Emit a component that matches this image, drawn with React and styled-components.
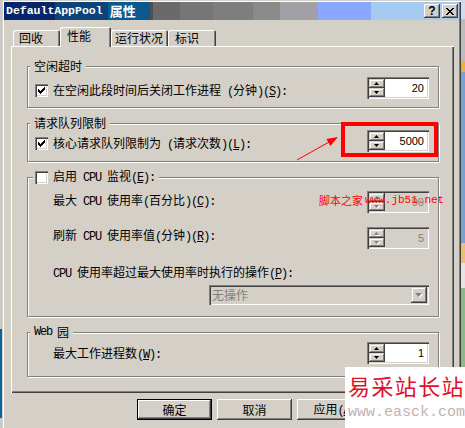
import React from 'react';
import styled, { createGlobalStyle } from 'styled-components';

const GRAY = '#d4d0c8';
const CJK_FONT = '"Noto Sans CJK SC", "Noto Sans", sans-serif';
const MONO_FONT = '"Liberation Mono", "Noto Sans CJK SC", monospace';

const Global = createGlobalStyle`
  html, body { margin: 0; padding: 0; background: ${GRAY}; overflow: hidden; }
  #root { width: 465px; height: 428px; }
`;

const Desktop = styled.div`
  position: relative;
  display: flex;
  width: 465px;
  height: 428px;
  overflow: hidden;
  background: ${GRAY};
  font-family: ${CJK_FONT};
  font-size: 12px;
  line-height: 14px;
  color: #000;
`;

const LeftStrip = styled.div`
  flex: none;
  width: 2px;
  background: linear-gradient(to bottom, #c8c8c8 0 329px, #0a64a0 329px 418px, #c8c8c8 418px);
`;

const RightStrip = styled.div`
  flex: none;
  width: 4px;
  background: linear-gradient(
    to bottom,
    #d0dcec 0 19px,
    #bcbcbc 19px 62px,
    #f0b040 62px 72px,
    #7aa0d8 72px 243px,
    #f0c070 243px 263px,
    #e4e4e4 263px 288px,
    #8cb88c 288px 367px,
    #ffffff 367px
  );
`;

const Window = styled.div`
  flex: none;
  width: 459px;
  box-sizing: border-box;
  padding: 2px 2px 0 2px;
  display: flex;
  flex-direction: column;
  background: ${GRAY};
  box-shadow: inset 1px 1px 0 ${GRAY}, inset 2px 2px 0 #fff, inset -1px 0 0 #404040, inset -2px 0 0 #808080;
`;

const TitleBar = styled.div`
  flex: none;
  height: 18px;
  display: flex;
  align-items: center;
  justify-content: space-between;
  padding: 0 1px 0 2px;
  background: linear-gradient(
    to right,
    #0a246a 0 51px,
    #0b437a 51px 104px,
    #0a5a90 104px 146px,
    #505050 146px 149px,
    #6a6a6a 149px 176px,
    #767676 176px 209px,
    #7e7e7e 209px 249px,
    #8a8a8a 249px 276px,
    #a0a0a6 276px 314px,
    #8aa8ff 314px 367px,
    #a6caf0 367px
  );
`;

const TitleText = styled.div`
  display: flex;
  align-items: center;
  gap: 7px;
  color: #fff;
  font-weight: bold;
  white-space: nowrap;
`;

const TitleLatin = styled.span`
  font-family: ${MONO_FONT};
  font-size: 11.5px;
`;

const TitleCJK = styled.span`
  font-family: ${CJK_FONT};
  font-size: 13px;
`;

const CapButtons = styled.div`
  display: flex;
  gap: 2px;
`;

const CapBtn = styled.div`
  box-sizing: border-box;
  width: 16px;
  height: 14px;
  display: flex;
  align-items: center;
  justify-content: center;
  background: ${GRAY};
  box-shadow: inset -1px -1px 0 #404040, inset 1px 1px 0 #fff, inset -2px -2px 0 #808080;
  font-family: "Liberation Sans", sans-serif;
  font-weight: bold;
  font-size: 12px;
  line-height: 12px;
  color: #000;
`;

const Body = styled.div`
  flex: 1;
  display: flex;
  flex-direction: column;
  padding: 7px 5px 0 7px;
`;

const TabStrip = styled.div`
  display: flex;
  align-items: flex-end;
  height: 19px;
  padding-left: 2px;
  position: relative;
  z-index: 2;
`;

const Tab = styled.div`
  box-sizing: border-box;
  width: ${p => p.$w}px;
  height: ${p => (p.$active ? 20 : 16)}px;
  margin-bottom: ${p => (p.$active ? -1 : 0)}px;
  padding-left: ${p => p.$pl}px;
  padding-bottom: ${p => (p.$active ? 2 : 0)}px;
  display: flex;
  align-items: center;
  background: ${GRAY};
  border-radius: 2px 2px 0 0;
  box-shadow: inset 1px 1px 0 #fff, inset -1px 0 0 #404040, inset -2px 0 0 #808080;
  white-space: nowrap;
`;

const Panel = styled.div`
  box-sizing: border-box;
  height: 347px;
  padding: 13px 15px 0 16px;
  display: flex;
  flex-direction: column;
  gap: 8px;
  background: ${GRAY};
  box-shadow: inset 1px 1px 0 #fff, inset -1px -1px 0 #404040, inset -2px -2px 0 #808080;
`;

const Group = styled.fieldset`
  margin: 0;
  padding: 0;
  min-width: 0;
  border: 1px solid #808080;
  box-shadow: inset 1px 1px 0 #fff, 1px 1px 0 #fff;
`;

const Legend = styled.legend`
  margin-left: ${p => p.$ml ?? 2}px;
  padding: 0 4px 0 ${p => p.$pl ?? 4}px;
  height: 14px;
  line-height: 14px;
  display: flex;
  align-items: center;
  gap: 5px;
  background: ${GRAY};
  white-space: nowrap;
`;

const GroupInner = styled.div`
  display: flex;
  flex-direction: column;
  padding: ${p => p.$pt}px 9px ${p => p.$pb}px 7px;
`;

const Row = styled.div`
  display: flex;
  align-items: flex-start;
  justify-content: space-between;
  margin-top: ${p => p.$mt || 0}px;
`;

const RowEnd = styled.div`
  display: flex;
  justify-content: flex-end;
  margin-top: ${p => p.$mt || 0}px;
`;

const LabelLine = styled.div`
  display: flex;
  align-items: center;
  gap: 5px;
  height: 13px;
  margin-top: ${p => p.$dy || 0}px;
  padding-left: ${p => p.$indent || 0}px;
  white-space: nowrap;
`;

const Run = styled.span`
  font-family: ${p => (p.$latin ? MONO_FONT : CJK_FONT)};
  letter-spacing: ${p => (p.$latin ? '-1.2px' : '0')};
  font-size: 12px;
`;

const Acc = styled.span`
  font-family: ${MONO_FONT};
  letter-spacing: -1.2px;
  text-decoration: underline;
  text-underline-offset: 1px;
`;

const CJK_RE = /[\u2e80-\u9fff\uf900-\ufaff\uff00-\uffef\u3000-\u303f]/;

function Mixed({ text }) {
  const runs = [];
  for (const ch of text) {
    const c = CJK_RE.test(ch);
    const last = runs[runs.length - 1];
    if (last && last.c === c) last.s += ch;
    else runs.push({ c, s: ch });
  }
  return runs.map((r, i) => (
    <Run key={i} $latin={!r.c}>
      {r.s}
    </Run>
  ));
}

function Label({ text, acc }) {
  return (
    <span>
      <Mixed text={text} />
      {acc && (
        <>
          <Run $latin>(</Run>
          <Acc>{acc}</Acc>
          <Run $latin>):</Run>
        </>
      )}
    </span>
  );
}

const CheckBox = styled.div`
  box-sizing: border-box;
  width: 13px;
  height: 13px;
  flex: none;
  background: #fff;
  box-shadow: inset 1px 1px 0 #808080, inset 2px 2px 0 #404040, inset -1px -1px 0 #fff, inset -2px -2px 0 ${GRAY};
  display: flex;
  align-items: center;
  justify-content: center;
`;

function Check({ checked }) {
  return (
    <CheckBox>
      {checked && (
        <svg width="13" height="13" viewBox="0 0 13 13" shapeRendering="crispEdges">
          <path d="M3 5h1v1h1v1h1V6h1V5h1V4h1V3h1v3H9v1H8v1H7v1H6v1H5V9H4V8H3z" fill="#000" />
        </svg>
      )}
    </CheckBox>
  );
}

const SpinBox = styled.div`
  box-sizing: border-box;
  width: 62px;
  height: 22px;
  flex: none;
  padding: 2px;
  display: flex;
  background: ${p => (p.$disabled ? GRAY : '#fff')};
  box-shadow: inset 1px 1px 0 #808080, inset 2px 2px 0 #404040, inset -1px -1px 0 #fff, inset -2px -2px 0 ${GRAY};
`;

const SpinBtns = styled.div`
  display: flex;
  flex-direction: column;
  width: 16px;
  flex: none;
`;

const RaisedBtn = styled.div`
  box-sizing: border-box;
  flex: 1;
  display: flex;
  align-items: center;
  justify-content: center;
  background: ${GRAY};
  box-shadow: inset -1px -1px 0 #404040, inset 1px 1px 0 ${GRAY}, inset -2px -2px 0 #808080, inset 2px 2px 0 #fff;
`;

const SpinValue = styled.div`
  flex: 1;
  text-align: right;
  padding-right: 3px;
  font-family: "Liberation Sans", Arial, sans-serif;
  font-size: 11px;
  line-height: 18px;
  color: ${p => (p.$disabled ? '#808080' : '#000')};
`;

function Arrow({ up, disabled, w = 5, h = 3 }) {
  const pts = up ? `0,${h} ${w},${h} ${w / 2},0` : `0,0 ${w},0 ${w / 2},${h}`;
  return (
    <svg width={w + 1} height={h + 1} viewBox={`0 0 ${w + 1} ${h + 1}`}>
      {disabled && <polygon points={pts} fill="#fff" transform="translate(1,1)" />}
      <polygon points={pts} fill={disabled ? '#808080' : '#000'} />
    </svg>
  );
}

function Spinner({ value, disabled }) {
  return (
    <SpinBox $disabled={disabled}>
      <SpinBtns>
        <RaisedBtn>
          <Arrow up disabled={disabled} />
        </RaisedBtn>
        <RaisedBtn>
          <Arrow disabled={disabled} />
        </RaisedBtn>
      </SpinBtns>
      <SpinValue $disabled={disabled}>{value}</SpinValue>
    </SpinBox>
  );
}

const Combo = styled.div`
  box-sizing: border-box;
  width: 220px;
  height: 20px;
  padding: 2px;
  display: flex;
  background: ${GRAY};
  box-shadow: inset 1px 1px 0 #808080, inset 2px 2px 0 #404040, inset -1px -1px 0 #fff, inset -2px -2px 0 ${GRAY};
`;

const ComboText = styled.div`
  flex: 1;
  padding-left: 1px;
  line-height: 16px;
  color: #808080;
`;

const ComboBtn = styled(RaisedBtn)`
  flex: none;
  width: 16px;
`;

const ButtonRow = styled.div`
  display: flex;
  justify-content: flex-end;
  gap: 5px;
  margin-top: 6px;
  padding-right: 2px;
`;

const PushBtn = styled.div`
  box-sizing: border-box;
  width: 75px;
  height: 21px;
  display: flex;
  align-items: center;
  justify-content: center;
  background: ${GRAY};
  box-shadow: ${p =>
    p.$default
      ? `inset 0 0 0 1px #000, inset -2px -2px 0 #404040, inset 2px 2px 0 #fff, inset -3px -3px 0 #808080`
      : `inset -1px -1px 0 #404040, inset 1px 1px 0 #fff, inset -2px -2px 0 #808080`};
`;

/* Overlays: annotations pasted on top of the screenshot */
const RedBox = styled.div`
  position: absolute;
  left: 341px;
  top: 122px;
  width: 97px;
  height: 35px;
  box-sizing: border-box;
  border: 4px solid #ff0000;
  pointer-events: none;
`;

const ArrowSvg = styled.svg`
  position: absolute;
  left: 290px;
  top: 130px;
`;

const JbMark = styled.div`
  position: absolute;
  left: 319px;
  top: 193px;
  display: flex;
  align-items: center;
  gap: 2px;
  color: #ff0000;
  white-space: nowrap;
  line-height: 14px;
`;

const JbCjk = styled.span`
  font-family: ${CJK_FONT};
  font-size: 11px;
`;

const JbUrl = styled.span`
  font-family: ${MONO_FONT};
  font-size: 11px;
`;

const EasckBox = styled.div`
  position: absolute;
  left: 345px;
  top: 367px;
  width: 120px;
  height: 61px;
  background: #fff;
  display: flex;
  flex-direction: column;
  padding: 3px 0 0 3px;
  box-sizing: border-box;
`;

const EasckTitle = styled.div`
  font-family: ${CJK_FONT};
  font-size: 22px;
  line-height: 30px;
  letter-spacing: 1.4px;
  color: #e0102a;
  white-space: nowrap;
`;

const EasckUrl = styled.div`
  font-family: ${MONO_FONT};
  font-size: 15px;
  line-height: 18px;
  margin-top: 4px;
  color: #c4b0b6;
  white-space: nowrap;
`;

const tabs = [
  { label: '回收', w: 47, pl: 6 },
  { label: '性能', w: 51, pl: 7, active: true },
  { label: '运行状况', w: 57, pl: 4 },
  { label: '标识', w: 48, pl: 7 },
];

export default function App() {
  return (
    <>
      <Global />
      <Desktop>
        <LeftStrip />
        <Window>
          <TitleBar>
            <TitleText>
              <TitleLatin>DefaultAppPool</TitleLatin>
              <TitleCJK>属性</TitleCJK>
            </TitleText>
            <CapButtons>
              <CapBtn>?</CapBtn>
              <CapBtn>
                <svg width="8" height="7" viewBox="0 0 8 7" shapeRendering="crispEdges">
                  <path d="M0 0h2v1h1v1h2V1h1V0h2v1H7v1H6v1H5v1h1v1h1v1h1v1H6V6H5V5H3v1H2v1H0V6h1V5h1V4h1V3H2V2H1V1H0z" fill="#000" />
                </svg>
              </CapBtn>
            </CapButtons>
          </TitleBar>
          <Body>
            <TabStrip>
              {tabs.map(t => (
                <Tab key={t.label} $w={t.w} $pl={t.pl} $active={t.active}>
                  {t.label}
                </Tab>
              ))}
            </TabStrip>
            <Panel>
              <Group>
                <Legend>
                  <Mixed text="空闲超时" />
                </Legend>
                <GroupInner $pt={4} $pb={8}>
                  <Row>
                    <LabelLine $dy={7}>
                      <Check checked />
                      <Label text="在空闲此段时间后关闭工作进程 (分钟)" acc="S" />
                    </LabelLine>
                    <Spinner value="20" />
                  </Row>
                </GroupInner>
              </Group>

              <Group>
                <Legend>
                  <Mixed text="请求队列限制" />
                </Legend>
                <GroupInner $pt={0} $pb={9}>
                  <Row>
                    <LabelLine $dy={7}>
                      <Check checked />
                      <Label text="核心请求队列限制为 (请求次数)" acc="L" />
                    </LabelLine>
                    <Spinner value="5000" />
                  </Row>
                </GroupInner>
              </Group>

              <Group>
                <Legend $ml={5} $pl={2}>
                  <Check />
                  <Label text="启用 CPU 监视" acc="E" />
                </Legend>
                <GroupInner $pt={7} $pb={11}>
                  <Row>
                    <LabelLine $dy={3} $indent={18}>
                      <Label text="最大 CPU 使用率(百分比)" acc="C" />
                    </LabelLine>
                    <Spinner value="90" disabled />
                  </Row>
                  <Row $mt={14}>
                    <LabelLine $dy={2} $indent={18}>
                      <Label text="刷新 CPU 使用率值(分钟)" acc="R" />
                    </LabelLine>
                    <Spinner value="5" disabled />
                  </Row>
                  <Row $mt={17}>
                    <LabelLine $indent={18}>
                      <Label text="CPU 使用率超过最大使用率时执行的操作" acc="P" />
                    </LabelLine>
                  </Row>
                  <RowEnd $mt={6}>
                    <Combo>
                      <ComboText>无操作</ComboText>
                      <ComboBtn>
                        <Arrow disabled w={7} h={4} />
                      </ComboBtn>
                    </Combo>
                  </RowEnd>
                </GroupInner>
              </Group>

              <Group>
                <Legend>
                  <Mixed text="Web 园" />
                </Legend>
                <GroupInner $pt={3} $pb={12}>
                  <Row>
                    <LabelLine $dy={5} $indent={18}>
                      <Label text="最大工作进程数" acc="W" />
                    </LabelLine>
                    <Spinner value="1" />
                  </Row>
                </GroupInner>
              </Group>
            </Panel>
            <ButtonRow>
              <PushBtn $default>确定</PushBtn>
              <PushBtn>取消</PushBtn>
              <PushBtn>
                <span>
                  应用<Run $latin>(</Run>
                  <Acc>A</Acc>
                  <Run $latin>)</Run>
                </span>
              </PushBtn>
              <PushBtn>帮助</PushBtn>
            </ButtonRow>
          </Body>
        </Window>
        <RightStrip />

        <RedBox />
        <ArrowSvg width="55" height="35" viewBox="0 0 55 35">
          <line x1="7" y1="30" x2="39" y2="12" stroke="#ff0000" strokeWidth="1" />
          <polygon points="48,7 40.4,15.9 36.4,8.9" fill="#ff0000" />
        </ArrowSvg>
        <JbMark>
          <JbCjk>脚本之家</JbCjk>
          <JbUrl>www.jb51.net</JbUrl>
        </JbMark>
        <EasckBox>
          <EasckTitle>易采站长站</EasckTitle>
          <EasckUrl>www.easck.com</EasckUrl>
        </EasckBox>
      </Desktop>
    </>
  );
}
